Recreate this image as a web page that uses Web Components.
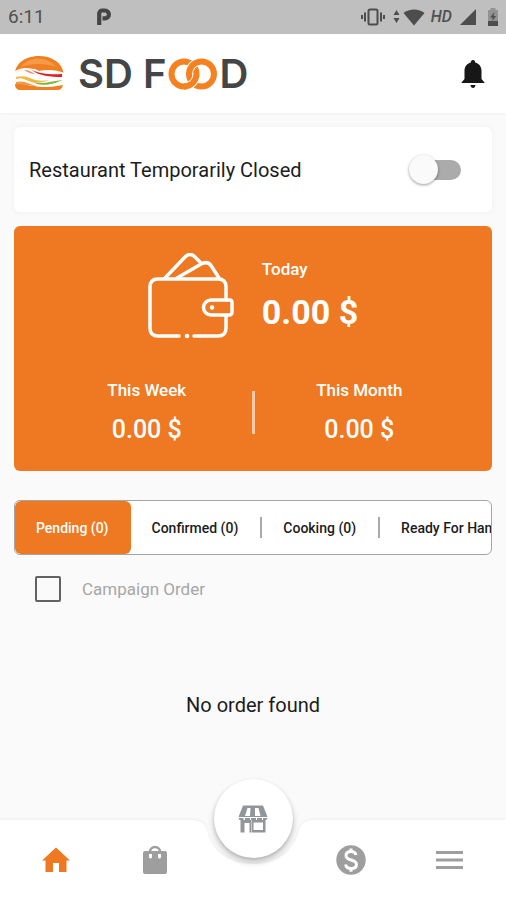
<!DOCTYPE html>
<html lang="en">
<head>
<meta charset="utf-8">
<meta name="viewport" content="width=device-width, initial-scale=1">
<title>SD Food</title>
<style>
body{margin:0;background:#fafafa;font-family:Roboto,"Liberation Sans",sans-serif;color:#1c1c1c}
</style>
</head>
<body>
<food-app></food-app>
<script>
const define = (name, html, setup) => customElements.define(name, class extends HTMLElement {
  constructor() {
    super();
    const t = document.createElement('template');
    t.innerHTML = '<style>*{box-sizing:border-box}:host{display:block}svg{display:block}button{border:0;background:none;padding:0;margin:0;font:inherit;color:inherit;cursor:pointer}</style>' + html;
    this.attachShadow({mode: 'open'}).append(t.content.cloneNode(true));
    if (setup) setup(this);
  }
});

define('status-bar', `
<style>
:host{display:flex;align-items:center;height:34px;padding:0 8px;background:#bfbfbf;color:#505050;font-size:19px;line-height:24px}
.p{margin-left:52px;flex:none}
.right{margin-left:auto;display:flex;align-items:center;height:24px}
.hd{font-size:16px;font-weight:500;font-style:italic;margin:0 8px 0 6px}
</style>
<span>6:11</span>
<svg class="p" width="14" height="18" viewBox="0 0 14 18"><path d="M2.2 17V5.5a3 3 0 0 1 3-3H8a3.800 3.800 0 0 1 0 7.800H5.500" fill="none" stroke="#454545" stroke-width="4.200"/></svg>
<div class="right">
<svg width="24" height="18" viewBox="0 0 24 18" fill="#4d4d4d"><rect x="7.500" y="1.500" width="9" height="15" rx="1.500" fill="none" stroke="#4d4d4d" stroke-width="2"/><path d="M3 4.500h2v9H3zM19 4.500h2v9h-2z"/><path d="M0 7h2v4H0zM22 7h2v4h-2z"/></svg>
<svg width="7" height="16" viewBox="0 0 7 16" style="margin:0 3px 0 8px" fill="#4d4d4d"><path d="M3.500 1 6.500 6h-6zM.5 9h6l-3 5z"/></svg>
<svg width="22" height="18" viewBox="0 0 22 18"><path d="M.5 5C6 .2 16 .2 21.500 5L11 17.500z" fill="#4d4d4d"/></svg>
<span class="hd">HD</span>
<svg width="17" height="16" viewBox="0 0 17 16"><path d="M16 0v16H0z" fill="#4d4d4d"/></svg>
<svg width="12" height="18" viewBox="0 0 12 18" style="margin-left:10px;margin-right:-1px"><path d="M3.500 0h5v2H11v11H1V2h2.500z" fill="#929292"/><path d="M1 13h10v5H1z" fill="#4d4d4d"/><path d="M7.500 4 3 9.500h2.500V13L9 8H6.500z" fill="#4d4d4d"/></svg>
</div>`);

define('brand-logo', `
<style>
:host{display:flex;align-items:center}
.burger{margin-right:14px}
.word{display:flex;align-items:center;font:600 40px/44px Inter,"Liberation Sans",sans-serif;color:#444547}
.f{margin-left:10px}
.rings{margin:0 1px 0 2px}
</style>
<svg class="burger" width="49" height="36" viewBox="0 0 49 36">
<path d="M0 17C1 6 12 0 24 0s23 6 24.500 17c-5-3-17-4-24-2-7-4-18-3-24.500 2z" fill="#f08022"/>
<path d="M6 11C11 4 19 2 27 3c6 1 11 4 14 8-10-4-25-4-35 0z" fill="#f6a052" opacity=".8"/>
<path d="M0 28c8-2 12 2 19 2 8 2 19 1 29-1-1 4-3 5-6 5H6c-4 0-6-2-6-6z" fill="#f08022"/>
<path d="M0 15c7-4 14-4 21 0 8 3 18 3 27 1v6c-8 0-17-1-24-3-8-4-14-4-24-2z" fill="#fff7ef"/>
<path d="M17 14c8 4 20 5 30 4v3c-11 0-23-1-30-7z" fill="#d9202b"/>
<path d="M9 14c4 0 8 2 11 4-4 0-8-2-11-4z" fill="#ee8c84"/>
<path d="M1 21c9-2 13 1 19 3 6 1 9 1 14 0-9 4-17 3-23 0-4-2-6-2-10-1z" fill="#f5b73f"/>
<path d="M17 26c10 3 20-1 31-2-8 3-18 8-31 2z" fill="#7db83a"/>
<path d="M1 26c8-2 13 2 21 4-8 0-12-2-21-2z" fill="#f39a45"/>
</svg>
<div class="word"><span>SD</span><span class="f">F</span>
<svg class="rings" width="50" height="34" viewBox="0 0 50 34" fill="none" stroke="#f58220" stroke-width="6">
<circle cx="16" cy="17" r="12.500"/>
<circle cx="33.500" cy="17" r="12.500" stroke="#fff" stroke-width="8"/>
<circle cx="33.500" cy="17" r="12.500"/>
<path d="M28.300 19.200A12.500 12.500 0 0 1 18.200 29.300" stroke="#fff" stroke-width="8"/>
<path d="M28.400 18.200A12.500 12.500 0 0 1 16 29.500"/>
</svg>
<span>D</span></div>`);

define('app-header', `
<style>
:host{display:flex;align-items:center;justify-content:space-between;height:79px;padding:0 21px 0 15px;background:#fff;box-shadow:0 1px 3px #0000000a}
</style>
<brand-logo></brand-logo>
<button aria-label="Notifications"><svg width="24" height="30" viewBox="0 0 24 30"><path d="M12 1c1.500 0 2.200 1 2.200 2.400 4 1 6.300 4.300 6.300 8.600v8l3 3.500v.5H.5v-.5l3-3.500v-8c0-4.300 2.300-7.600 6.300-8.600C9.800 2 10.500 1 12 1z" fill="#171717"/><path d="M9.500 26h5c-.3 4-4.700 4-5 0z" fill="#171717"/></svg></button>`);

define('closed-switch', `
<style>
:host{background:#fff;border-radius:6px;box-shadow:0 0 6px #0000000c}
label{display:flex;align-items:center;justify-content:space-between;height:85px;padding:0 31px 0 15px;font-size:20px;line-height:28px}
input{appearance:none;margin:0;width:48px;height:20px;border-radius:10px;background:#ababab;flex:none;display:flex;align-items:center}
input::before{content:"";width:29px;height:29px;border-radius:50%;background:#fafafa;box-shadow:0 1px 3px #0006;flex:none;margin-left:-4px}
input:checked{justify-content:flex-end;background:#f6bb8f}
</style>
<label><slot></slot><input type="checkbox" role="switch"></label>`);

define('earning-item', `
<style>
:host{display:flex;flex-direction:column;align-items:center;font-weight:500;font-size:17px;line-height:20px;gap:16px}
.v{font-size:25px;line-height:28px}
:host([large]){align-items:flex-start;gap:13px}
:host([large]) .v{font-size:34px;line-height:40px;font-weight:700}
</style>
<span><slot></slot></span><span class="v"><slot name="value"></slot></span>`);

define('earnings-card', `
<style>
:host{background:#ee7922;color:#fff;border-radius:6px;padding:27px 0 26px}
.top{display:flex;justify-content:center;gap:28px;height:86px}
.top earning-item{padding-top:6px}
.row{display:grid;grid-template-columns:1fr 3px 1fr;align-items:center;margin-top:40px;padding:0 28px;min-height:66px}
.line{height:43px;background:#fff;opacity:.6}
</style>
<div class="top">
<svg width="86" height="87" viewBox="0 0 86 87" fill="none" stroke="#fff" stroke-width="3.500" stroke-linecap="round" stroke-linejoin="round">
<path d="M78 47V34q0-8-8-8H10q-8 0-8 8v41q0 8 8 8h21M46 83h24q8 0 8-8V62"/>
<path d="M39 83h.1M64 54.500h.1" stroke-width="4.500"/>
<path d="M82 47H63a7.500 7.500 0 0 0 0 15h18q3 0 3-3V50q0-3-2-3z"/>
<path d="M17 25 37 4q5-5 10 0l6 6M29 25l25-14.500q6-2.500 9 2L71 25"/>
</svg>
<earning-item large>Today<span slot="value">0.00 $</span></earning-item>
</div>
<div class="row"><earning-item>This Week<span slot="value">0.00 $</span></earning-item><div class="line"></div><earning-item>This Month<span slot="value">0.00 $</span></earning-item></div>`);

define('order-tab', `
<style>
:host{flex:none;display:flex;align-items:center}
button{height:53px;padding:0 22px 0 21px;border-radius:6px;font-size:14px;font-weight:500;white-space:nowrap}
:host([active]) button{background:#ee7922;color:#fff}
:host([divided])::after{content:"";width:2px;height:21px;background:#aaa}
</style>
<button role="tab"><slot></slot></button>`, el => el.shadowRoot.querySelector('button').setAttribute('aria-selected', el.hasAttribute('active')));

define('order-tabs', `
<style>
:host{display:flex;overflow:hidden;background:#fff;border:1px solid #a3a5a6;border-radius:6px}
</style>
<slot></slot>`);

define('campaign-check', `
<style>
label{display:flex;align-items:center;gap:21px;padding-left:21px;height:26px;font-size:17px;line-height:24px;color:#a6a6a6}
input{appearance:none;margin:0;width:26px;height:26px;border:2px solid #626262;border-radius:2px}
input:checked{background:#ee7922}
</style>
<label><input type="checkbox"><slot></slot></label>`);

define('nav-bar', `
<style>
:host{position:relative;height:80px;color:#9e9e9e}
.bg{position:absolute;inset:0;display:flex;filter:drop-shadow(0 -1px 1px #0000000c)}
.bg i{flex:1;background:#fff}
nav{position:relative;display:flex;height:100%;padding:0 7px}
nav button{flex:1;display:flex;align-items:center;justify-content:center}
.on{color:#ee7922}
.slot{flex:1;display:flex;justify-content:center}
.slot .fab{flex:none;width:79px;height:79px;margin-top:-41px;border-radius:50%;background:#fff;box-shadow:0 4px 6px #0000003d,0 1px 3px #0000001a}
</style>
<div class="bg"><i></i><svg width="122" height="80" viewBox="0 0 122 80"><path d="M0 0c9 0 13 4 15 11C20 31 37 44 61 44s41-13 46-33c2-7 6-11 15-11v80H0z" fill="#fff"/></svg><i></i></div>
<nav aria-label="Main">
<button class="on" aria-label="Home"><svg width="28" height="26" viewBox="0 0 28 26"><path d="M14 .5 28 13.500h-3.500V25H17v-9h-6v9H3.500V13.500H0z" fill="currentColor"/></svg></button>
<button aria-label="Orders"><svg width="24" height="30" viewBox="0 0 24 30"><path d="M7 7a5 5 0 0 1 10 0" fill="none" stroke="currentColor" stroke-width="2.500"/><path d="M2 6h20q2 0 2 2v19q0 2-2 2H2q-2 0-2-2V8q0-2 2-2z" fill="currentColor"/><path d="M6 9h3v3.500q-1.500 2-3 0zM15 9h3v3.500q-1.500 2-3 0z" fill="#fff"/></svg></button>
<div class="slot"><button class="fab" aria-label="Restaurant"><svg width="30" height="28" viewBox="0 0 30 28" fill="#929698"><path d="M5 .5h20L29.500 12H.5z"/><path d="M9.500 3h3L12 11H7zM17 3h3.500l2 8H17z" fill="#fff"/><path d="M.5 13h5v2h-4zM7 13h5v2H7zM13 13h5v2h-5zM19 13h5v2h-5zM25 13h4.500l-1 2H25z"/><path d="M2.500 15h11v12.500h-2V18h-5v9.500h-4zM13 15h14.500v12.500H13zm2.500 2.500V25H25v-7.500z" fill-rule="evenodd"/></svg></button></div>
<button aria-label="Wallet"><svg width="30" height="30" viewBox="0 0 30 30"><circle cx="15" cy="15" r="14.700" fill="currentColor"/><path d="M20 10c-.5-2.500-2.500-3.500-5-3.500-3 0-5 1.500-5 4 0 6 10.500 3 10.500 9 0 2.600-2.200 4-5.300 4-3 0-5.200-1.300-5.600-4M15 3.500v3.500M15 23v3.800" fill="none" stroke="#fff" stroke-width="3"/></svg></button>
<button aria-label="Menu"><svg width="27" height="20" viewBox="0 0 27 20"><path d="M0 2.500h27M0 10h27M0 17.500h27" stroke="currentColor" stroke-width="3"/></svg></button>
</nav>`);

define('food-app', `
<style>
:host{display:flex;flex-direction:column;min-height:100vh}
main{flex:1;display:flex;flex-direction:column;padding:14px 14px 0}
earnings-card{margin-top:14px}
order-tabs{margin-top:29px}
campaign-check{margin-top:21px}
.empty{margin:90px 0;text-align:center;font-size:20px;line-height:26px}
</style>
<status-bar></status-bar>
<app-header></app-header>
<main>
<closed-switch>Restaurant Temporarily Closed</closed-switch>
<earnings-card></earnings-card>
<order-tabs role="tablist">
<order-tab active>Pending (0)</order-tab><order-tab divided>Confirmed (0)</order-tab><order-tab divided>Cooking (0)</order-tab><order-tab>Ready For Handover (0)</order-tab>
</order-tabs>
<campaign-check>Campaign Order</campaign-check>
<p class="empty">No order found</p>
</main>
<nav-bar></nav-bar>`);
</script>
</body>
</html>
